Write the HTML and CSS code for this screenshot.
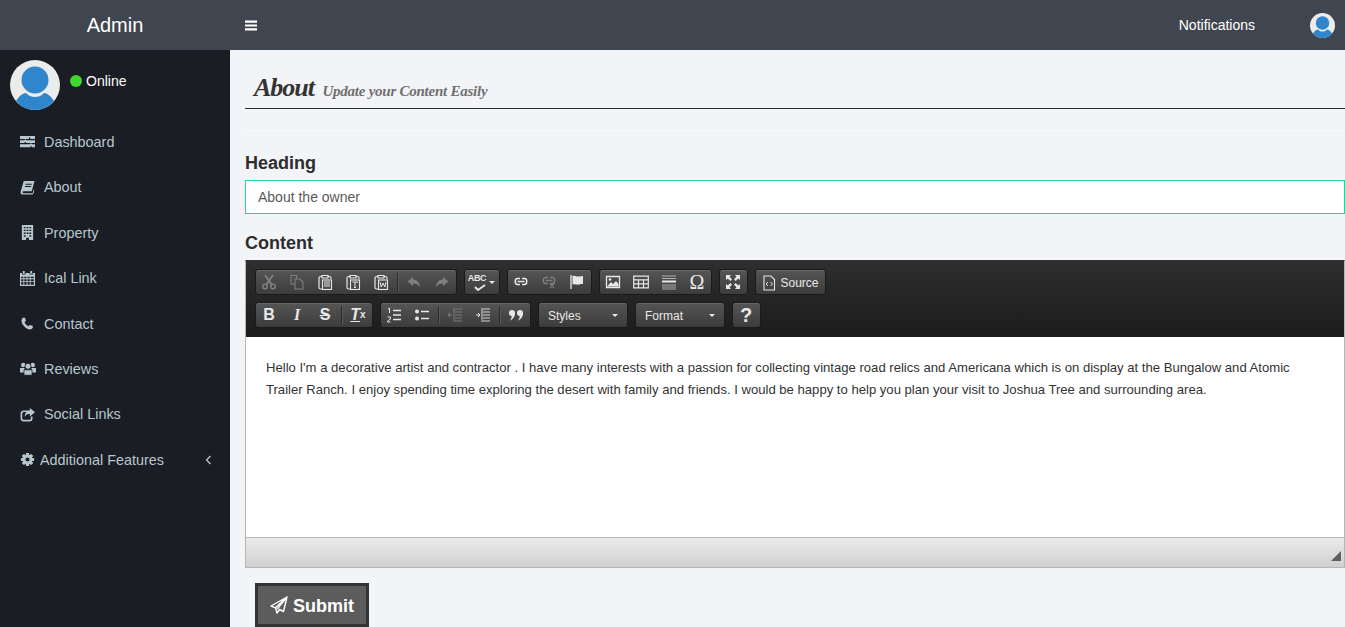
FILE: index.html

```html
<!DOCTYPE html>
<html>
<head>
    <title>Admin</title>
    <link rel="stylesheet" href="styles.css">
</head>
<body>
    <!-- shared icons -->
    <svg class="sprite" width="0" height="0">
        <symbol id="avatar" viewBox="0 0 50 50">
            <circle cx="25" cy="25" r="25" fill="#ececec"/>
            <circle cx="25" cy="20" r="13.5" fill="#2f86cc"/>
            <path d="M6 41 C9 36 13 33 16 33 C19 36.5 22 37 25 37 C28 37 31 36.5 34 33 C37 33 41 36 44 41 C39 47 32 50 25 50 C18 50 11 47 6 41Z" fill="#2f86cc"/>
        </symbol>
        <symbol id="clip" viewBox="0 0 16 16">
            <path d="M5 2.5H3.5C2.7 2.5 2 3.2 2 4V13.5C2 14.3 2.7 15 3.5 15H5M11 2.5H12.5C13.3 2.5 14 3.2 14 4V5M5 2.5V1.5H11V4H5Z" fill="none" stroke="currentColor" stroke-width="1.2"/>
            <rect x="5.5" y="6" width="9" height="9.5" fill="#4a4a4a" stroke="currentColor" stroke-width="1.1"/>
        </symbol>
    </svg>

    <!-- top bar -->
    <header class="topbar">
        <div class="brand">Admin</div>
        <div class="topbar-right">
            <svg class="burger" viewBox="0 0 13 11"><path d="M0 0H13V2.4H0ZM0 4.3H13V6.7H0ZM0 8.6H13V11H0Z" fill="#fff"/></svg>
            <span class="notes">Notifications</span>
            <svg class="top-avatar"><use href="#avatar"/></svg>
        </div>
    </header>

    <div class="layout">
        <!-- sidebar -->
        <aside class="sidebar">
            <div class="user">
                <svg class="user-avatar"><use href="#avatar"/></svg>
                <div class="status"><span class="dot"></span>Online</div>
            </div>
            <nav class="menu">
                <a class="item" href="#">
                    <svg class="ico" viewBox="0 0 16 16"><path d="M0 2H16V5.2H11V3.8H9.5V5.2H0ZM0 6.6H5V5.8H6.5V6.6H16V9.6H6.5V8.6H5V9.6H0ZM0 11H11V10.2H12.5V11H16V14H12.5V13H11V14H0Z" fill="currentColor"/></svg>
                    Dashboard
                </a>
                <a class="item" href="#">
                    <svg class="ico" viewBox="0 0 16 16"><path d="M4 1H15.5L12.5 12H3.5C2.6 12 2.6 14 3.5 14H13.5L15 9V13L13.5 15.5H2.5C1 15.5 .3 14 .7 12.5ZM5.8 4V5H12.5L12.8 4ZM5.2 6.5V7.5H11.8L12.1 6.5Z" fill="currentColor" fill-rule="evenodd"/></svg>
                    About
                </a>
                <a class="item" href="#">
                    <svg class="ico" viewBox="0 0 16 16"><path d="M2 0H14V16H9.5V13.5H6.5V16H2ZM4 2V3.5H6V2ZM7 2V3.5H9V2ZM10 2V3.5H12V2ZM4 5V6.5H6V5ZM7 5V6.5H9V5ZM10 5V6.5H12V5ZM4 8V9.5H6V8ZM7 8V9.5H9V8ZM10 8V9.5H12V8ZM4 11V12.5H6V11ZM10 11V12.5H12V11Z" fill="currentColor" fill-rule="evenodd"/></svg>
                    Property
                </a>
                <a class="item" href="#">
                    <svg class="ico" viewBox="0 0 16 16"><path d="M3 0H5V3H3ZM11 0H13V3H11ZM0 2H2.2V3.8H5.8V2H10.2V3.8H13.8V2H16V16H0ZM1.3 6V7.8H3.6V6ZM4.6 6V7.8H7V6ZM8 6V7.8H10.4V6ZM11.4 6V7.8H14.7V6ZM1.3 8.8V10.8H3.6V8.8ZM4.6 8.8V10.8H7V8.8ZM8 8.8V10.8H10.4V8.8ZM11.4 8.8V10.8H14.7V8.8ZM1.3 11.8V14.7H3.6V11.8ZM4.6 11.8V14.7H7V11.8ZM8 11.8V14.7H10.4V11.8ZM11.4 11.8V14.7H14.7V11.8Z" fill="currentColor" fill-rule="evenodd"/></svg>
                    Ical Link
                </a>
                <a class="item" href="#">
                    <svg class="ico" viewBox="0 0 16 16"><path d="M3.5 1.5L5.5 1.8L6.3 5.2L4.8 6.6C5.5 8.4 7 10 9 10.8L10.4 9.6L13.6 10.4L13.6 12.6C12.6 14.4 10.5 14.8 8.3 13.8C5 12.3 2.6 9.5 1.8 6.6C1.2 4.4 2 2.4 3.5 1.5Z" fill="currentColor"/></svg>
                    Contact
                </a>
                <a class="item" href="#">
                    <svg class="ico ico-wide" viewBox="0 0 18 16"><circle cx="3.6" cy="4" r="2.5" fill="currentColor"/><circle cx="14.4" cy="4" r="2.5" fill="currentColor"/><path d="M0 7.5H5V12.5H0ZM13 7.5H18V12.5H13Z" fill="currentColor"/><circle cx="9" cy="5.5" r="3.4" fill="currentColor" stroke="#1a1d23"/><path d="M4.5 9.5H13.5V15.5H4.5Z" fill="currentColor" stroke="#1a1d23" stroke-width=".8"/></svg>
                    Reviews
                </a>
                <a class="item" href="#">
                    <svg class="ico" viewBox="0 0 16 16"><path d="M10 4.5H4C2.6 4.5 1.5 5.6 1.5 7V12C1.5 13.4 2.6 14.5 4 14.5H10C11.4 14.5 12.5 13.4 12.5 12V10" fill="none" stroke="currentColor" stroke-width="1.8"/><path d="M10.5 1L16 5.5L10.5 10V7.4C8 7.4 6.2 8 5 10.5C5 6.5 7.5 4 10.5 3.8Z" fill="currentColor"/></svg>
                    Social Links
                </a>
                <a class="item item-tree" href="#">
                    <svg class="ico" viewBox="0 0 16 16"><g fill="currentColor"><rect x="6.3" y="1" width="3.4" height="14" rx=".6"/><rect x="1" y="6.3" width="14" height="3.4" rx=".6"/><rect x="6.3" y="1" width="3.4" height="14" rx=".6" transform="rotate(45 8 8)"/><rect x="6.3" y="1" width="3.4" height="14" rx=".6" transform="rotate(-45 8 8)"/><circle cx="8" cy="8" r="5.2"/></g><circle cx="8" cy="8" r="2.2" fill="#1a1d23"/></svg>
                    <span class="item-label">Additional Features</span>
                    <svg class="chev" viewBox="0 0 7 10"><path d="M5.5 1L1.5 5L5.5 9" fill="none" stroke="currentColor" stroke-width="1.3"/></svg>
                </a>
            </nav>
        </aside>

        <!-- main content -->
        <main class="content">
            <h1 class="page-title">About <small>Update your Content Easily</small></h1>
            <div class="band"></div>

            <div class="label label-first">Heading</div>
            <div class="field">About the owner</div>

            <div class="label label-second">Content</div>
            <div class="editor">
                <div class="toolbar">
                    <div class="row">
                        <div class="group">
                            <span class="btn off"><svg viewBox="0 0 16 16"><path d="M4 1L11 11M12 1L5 11" stroke="currentColor" stroke-width="2" fill="none"/><circle cx="4" cy="12.5" r="2.2" fill="none" stroke="currentColor" stroke-width="1.5"/><circle cx="12" cy="12.5" r="2.2" fill="none" stroke="currentColor" stroke-width="1.5"/></svg></span>
                            <span class="btn off"><svg viewBox="0 0 16 16"><path d="M6 10H2V1.5H7.5V5M6 5H11L14 8V15H6Z" fill="none" stroke="currentColor" stroke-width="1.1"/></svg></span>
                            <span class="btn"><svg viewBox="0 0 16 16"><use href="#clip"/><path d="M7 8H13M7 10H13M7 12H13" stroke="currentColor"/></svg></span>
                            <span class="btn"><svg viewBox="0 0 16 16"><use href="#clip"/><path d="M7.5 8H12.5V9M10 8V13.5M9 13.5H11" fill="none" stroke="currentColor"/></svg></span>
                            <span class="btn"><svg viewBox="0 0 16 16"><use href="#clip"/><path d="M7 8L8.2 13L10 9L11.8 13L13 8" fill="none" stroke="currentColor"/></svg></span>
                            <i class="sep"></i>
                            <span class="btn off"><svg viewBox="0 0 16 16"><path d="M7 3L1.5 7.5L7 12V9.5C10 9.5 12.5 10.5 14 13C14 8.5 11 5.8 7 5.5Z" fill="currentColor"/></svg></span>
                            <span class="btn off"><svg viewBox="0 0 16 16"><path d="M9 3L14.5 7.5L9 12V9.5C6 9.5 3.5 10.5 2 13C2 8.5 5 5.8 9 5.5Z" fill="currentColor"/></svg></span>
                        </div>
                        <div class="group">
                            <span class="btn btn-spell"><span class="abc">ABC</span><svg class="tick" viewBox="0 0 14 7"><path d="M2 3L5 6L12 1" fill="none" stroke="currentColor" stroke-width="1.8"/></svg><i class="caret"></i></span>
                        </div>
                        <div class="group">
                            <span class="btn"><svg viewBox="0 0 16 16"><path d="M7 4.5H4.5C1.5 4.5 1.5 10.5 4.5 10.5H7M9 4.5H11.5C14.5 4.5 14.5 10.5 11.5 10.5H9M4.5 7.5H11.5" fill="none" stroke="currentColor" stroke-width="1.5"/></svg></span>
                            <span class="btn off"><svg viewBox="0 0 16 16"><path d="M7 3.5H4.5C1.5 3.5 1.5 9.5 4.5 9.5H7M9 3.5H11.5C14.5 3.5 14.5 9.5 11.5 9.5H9M4.5 6.5H11.5M9 10L13 14M13 10L9 14" fill="none" stroke="currentColor" stroke-width="1.3"/></svg></span>
                            <span class="btn"><svg viewBox="0 0 16 16"><path d="M2 1V15" stroke="currentColor" stroke-width="1.3"/><path d="M3.5 2C6 1 8 3 10 2.5C11.5 2.2 13 2 14 2V10C11.5 10 9.5 11 7 10.5C5.5 10.2 4.5 10.2 3.5 10.5Z" fill="currentColor"/></svg></span>
                        </div>
                        <div class="group">
                            <span class="btn"><svg viewBox="0 0 16 16"><path d="M1.5 2.5H14.5V13.5H1.5Z" fill="none" stroke="currentColor" stroke-width="1.3"/><path d="M2.5 12L6 8L8 10L11 7L13.5 10V12.5H2.5Z" fill="currentColor"/><circle cx="5" cy="5.5" r="1.3" fill="currentColor"/></svg></span>
                            <span class="btn"><svg viewBox="0 0 16 16"><path d="M.7 2.2H15.3V13.8H.7ZM.7 5.8H15.3M.7 9.8H15.3M5.5 5.8V13.8M10.5 5.8V13.8" fill="none" stroke="currentColor" stroke-width="1.2"/></svg></span>
                            <span class="btn"><svg viewBox="0 0 16 16"><path d="M1 2H15M1 4.5H15M1 11H15M1 13H15M1 15H15" stroke="currentColor" stroke-opacity=".65"/><path d="M1 7.5H15" stroke="currentColor" stroke-width="2"/></svg></span>
                            <span class="btn btn-text omega">Ω</span>
                        </div>
                        <div class="group">
                            <span class="btn"><svg viewBox="0 0 16 16"><path d="M1 1H6L4.5 2.8L7 5.3L5.3 7L2.8 4.5L1 6ZM15 1V6L13.2 4.5L10.7 7L9 5.3L11.5 2.8L10 1ZM1 15V10L2.8 11.5L5.3 9L7 10.7L4.5 13.2L6 15ZM15 15H10L11.5 13.2L9 10.7L10.7 9L13.2 11.5L15 10Z" fill="currentColor"/></svg></span>
                        </div>
                        <div class="group">
                            <span class="btn btn-source"><svg viewBox="0 0 16 16"><path d="M3 1H10L13.5 4.5V15H3Z" fill="none" stroke="currentColor" stroke-width="1.1"/><path d="M7 7L5 9L7 11M9.5 7L11.5 9L9.5 11" fill="none" stroke="currentColor"/></svg>Source</span>
                        </div>
                    </div>
                    <div class="row">
                        <div class="group">
                            <span class="btn btn-text bold">B</span>
                            <span class="btn btn-text ital">I</span>
                            <span class="btn btn-text strike">S</span>
                            <i class="sep"></i>
                            <span class="btn btn-text clear"><u>T</u><sub>x</sub></span>
                        </div>
                        <div class="group">
                            <span class="btn"><svg viewBox="0 0 16 16"><path d="M7 3.5H15M7 8H15M7 12.5H15" stroke="currentColor" stroke-width="1.4"/><path d="M2 2L3.5 1.2V6M1.5 10H4.5V12L1.5 14V15H4.5" fill="none" stroke="currentColor"/></svg></span>
                            <span class="btn"><svg viewBox="0 0 16 16"><path d="M7 4.5H15M7 11.5H15" stroke="currentColor" stroke-width="1.5"/><circle cx="3" cy="4.5" r="2" fill="currentColor"/><circle cx="3" cy="11.5" r="2" fill="currentColor"/></svg></span>
                            <i class="sep"></i>
                            <span class="btn off"><svg viewBox="0 0 16 16"><path d="M8 2H15M8 5H15M8 8H15M8 11H15M8 14H15M7 1V15" stroke="currentColor" stroke-width=".9"/><path d="M1 8H5M3 6L1 8L3 10" fill="none" stroke="currentColor"/></svg></span>
                            <span class="btn"><svg viewBox="0 0 16 16"><path d="M8 2H15M8 5H15M8 8H15M8 11H15M8 14H15M7 1V15" stroke="currentColor" stroke-width=".9"/><path d="M1 8H5M3 6L5 8L3 10" fill="none" stroke="currentColor"/></svg></span>
                            <i class="sep"></i>
                            <span class="btn"><svg viewBox="0 0 16 16"><circle cx="4" cy="6" r="3" fill="currentColor"/><path d="M7 6C7 9.5 5 12.5 2 13.5C3.4 11.8 3.8 10 3.6 8.5Z" fill="currentColor"/><circle cx="12" cy="6" r="3" fill="currentColor"/><path d="M15 6C15 9.5 13 12.5 10 13.5C11.4 11.8 11.8 10 11.6 8.5Z" fill="currentColor"/></svg></span>
                        </div>
                        <div class="group combo">Styles<i class="caret"></i></div>
                        <div class="group combo">Format<i class="caret"></i></div>
                        <div class="group">
                            <span class="btn btn-text help">?</span>
                        </div>
                    </div>
                </div>
                <div class="editor-body">
                    <p>Hello I'm a decorative artist and contractor . I have many interests with a passion for collecting vintage road relics and Americana which is on display at the Bungalow and Atomic Trailer Ranch. I enjoy spending time exploring the desert with family and friends. I would be happy to help you plan your visit to Joshua Tree and surrounding area.</p>
                </div>
                <div class="editor-foot"><i class="resize"></i></div>
            </div>

            <a class="submit" href="#">
                <svg viewBox="0 0 18 18"><path d="M17 1L1 10L5.5 11.8L7 17L9.5 13.5L13.5 15.5ZM17 1L5.5 11.8M17 1L7.2 13" fill="none" stroke="#fff" stroke-width="1.4" stroke-linejoin="round"/></svg>
                <span class="submit-text">Submit</span>
            </a>
        </main>
    </div>
</body>
</html>
```

FILE: styles.css

```css
/* page */
html, body {
    height: 100%;
}
body {
    margin: 0;
    overflow: hidden;
    font-family: "Liberation Sans", Arial, sans-serif;
    font-size: 14px;
    background: #f3f4f8;
    color: #2d2d2d;
}
.sprite {
    display: none;
}

/* top bar */
.topbar {
    display: flex;
    height: 50px;
    background: #40464f;
    color: #fff;
}
.brand {
    width: 230px;
    font-size: 20px;
    line-height: 50px;
    text-align: center;
}
.topbar-right {
    flex: 1;
    display: flex;
    align-items: center;
    padding: 0 10px 0 15px;
}
.burger {
    width: 12px;
    height: 11px;
}
.notes {
    margin-left: auto;
    margin-right: 55px;
}
.top-avatar {
    width: 25px;
    height: 25px;
}

/* sidebar */
.layout {
    display: flex;
    height: 577px;
}
.sidebar {
    width: 230px;
    flex: none;
    background: #1a1d23;
}
.user {
    display: flex;
    padding: 10px 10px 0;
    height: 59.3px;
}
.user-avatar {
    width: 50px;
    height: 50px;
}
.status {
    display: flex;
    align-items: center;
    height: 42px;
    margin-left: 10px;
    color: #fff;
}
.dot {
    width: 12px;
    height: 12px;
    border-radius: 50%;
    background: #42d62f;
    margin-right: 4px;
}
.item {
    display: flex;
    align-items: center;
    height: 45.4px;
    padding: 0 20px;
    font-size: 14.4px;
    color: #b8c7ce;
    text-decoration: none;
}
.ico {
    width: 15px;
    height: 15px;
    margin-right: 9px;
    flex: none;
}
.ico-wide {
    width: 16px;
    margin-right: 8px;
}
.item-tree .ico {
    margin-right: 5px;
}
.item-label {
    flex: 1;
}
.chev {
    width: 7px;
    height: 10px;
    margin-right: -2px;
}

/* main content */
.content {
    flex: 1;
    min-width: 0;
    padding-left: 15px;
}
.page-title {
    height: 58px;
    margin: 0;
    padding-left: 9px;
    line-height: 76px;
    border-bottom: 1px solid #2b2d33;
    font-family: "Liberation Serif", serif;
    font-style: italic;
    font-size: 26px;
    font-weight: bold;
    letter-spacing: -1px;
    color: #333;
    white-space: nowrap;
}
.page-title small {
    margin-left: 3px;
    font-size: 15px;
    letter-spacing: -.25px;
    color: #6f6f6f;
}
.band {
    height: 2px;
    margin-top: 21px;
    background: #f6f7fa;
}
.label {
    height: 20px;
    line-height: 20px;
    font-size: 18px;
    font-weight: bold;
    margin-bottom: 7px;
}
.label-first {
    margin-top: 21px;
}
.label-second {
    margin-top: 19px;
}
.field {
    height: 34px;
    box-sizing: border-box;
    padding: 0 12px;
    line-height: 32px;
    background: #fff;
    border: 1px solid #1ed79b;
    color: #5a5a5a;
}

/* editor */
.editor {
    height: 308px;
    box-sizing: border-box;
    border: 1px solid #b6b6b6;
    border-top-color: #333;
    display: flex;
    flex-direction: column;
}
.toolbar {
    height: 76px;
    box-sizing: border-box;
    padding: 8px 9px 0;
    background: linear-gradient(#2e2e2e, #1c1c1c);
}
.row {
    display: flex;
    gap: 7px;
    height: 26px;
    margin-bottom: 7px;
}
.group {
    display: flex;
    align-items: center;
    height: 26px;
    border: 1px solid #1a1a1a;
    box-sizing: border-box;
    border-radius: 3px;
    background: linear-gradient(#555, #3c3c3c);
    color: #e8e8e8;
    box-shadow: inset 0 1px 0 #666;
}
.btn {
    width: 28px;
    height: 24px;
    display: flex;
    align-items: center;
    justify-content: center;
    flex: none;
}
.group > .btn:first-child {
    margin-left: -1px;
}
.btn svg {
    width: 16px;
    height: 16px;
}
.off {
    color: #7f7f7f;
}
.sep {
    width: 1px;
    height: 18px;
    margin: 0 2px;
    background: #2b2b2b;
    box-shadow: 1px 0 0 #5a5a5a;
}
.btn-text {
    font-size: 16px;
    font-weight: bold;
}
.ital {
    font-family: "Liberation Serif", serif;
    font-style: italic;
}
.strike {
    text-decoration: line-through;
}
.clear {
    font-style: italic;
}
.clear sub {
    font-size: 10px;
    line-height: 0;
    font-style: normal;
}
.omega {
    font-family: "Liberation Serif", serif;
    font-weight: normal;
    font-size: 20px;
}
.help {
    font-size: 20px;
}
.btn-spell {
    width: 35px;
    position: relative;
}
.abc {
    font-size: 9px;
    font-weight: bold;
    letter-spacing: -.3px;
    margin: -8px 9px 0 0;
}
.btn-spell .tick {
    position: absolute;
    left: 9px;
    top: 14px;
    width: 14px;
    height: 7px;
}
.caret {
    display: block;
    border: 3px solid transparent;
    border-top-color: #e8e8e8;
    border-bottom-width: 0;
}
.btn-spell .caret {
    position: absolute;
    right: 4px;
    top: 11px;
}
.btn-source {
    width: 70px;
    box-sizing: border-box;
    padding-top: 1px;
    font-size: 12px;
    gap: 3px;
}
.combo {
    width: 90px;
    padding: 1px 9px 0;
    justify-content: space-between;
    font-size: 12px;
}
.editor-body {
    flex: 1;
    background: #fff;
    padding: 20px 36px 20px 20px;
    font-size: 13.1px;
    line-height: 22px;
    color: #333;
}
.editor-body p {
    margin: 0;
}
.editor-foot {
    height: 30px;
    position: relative;
    background: linear-gradient(#ebebeb, #d0d0d0);
    border-top: 1px solid #b6b6b6;
    box-sizing: border-box;
}
.resize {
    position: absolute;
    right: 3px;
    bottom: 6px;
    border-style: solid;
    border-width: 0 0 10px 10px;
    border-color: transparent transparent #5f5f5f transparent;
}

/* submit button */
.submit {
    display: inline-flex;
    align-items: center;
    gap: 5px;
    height: 44px;
    box-sizing: border-box;
    margin: 15px 0 0 10px;
    padding: 0 12px;
    background: #5c5c5c;
    border: 3px solid #333;
    color: #fff;
    font-size: 18px;
    font-weight: bold;
    text-decoration: none;
}
.submit svg {
    width: 18px;
    height: 18px;
}
.submit-text {
    padding-top: 2px;
}
```
